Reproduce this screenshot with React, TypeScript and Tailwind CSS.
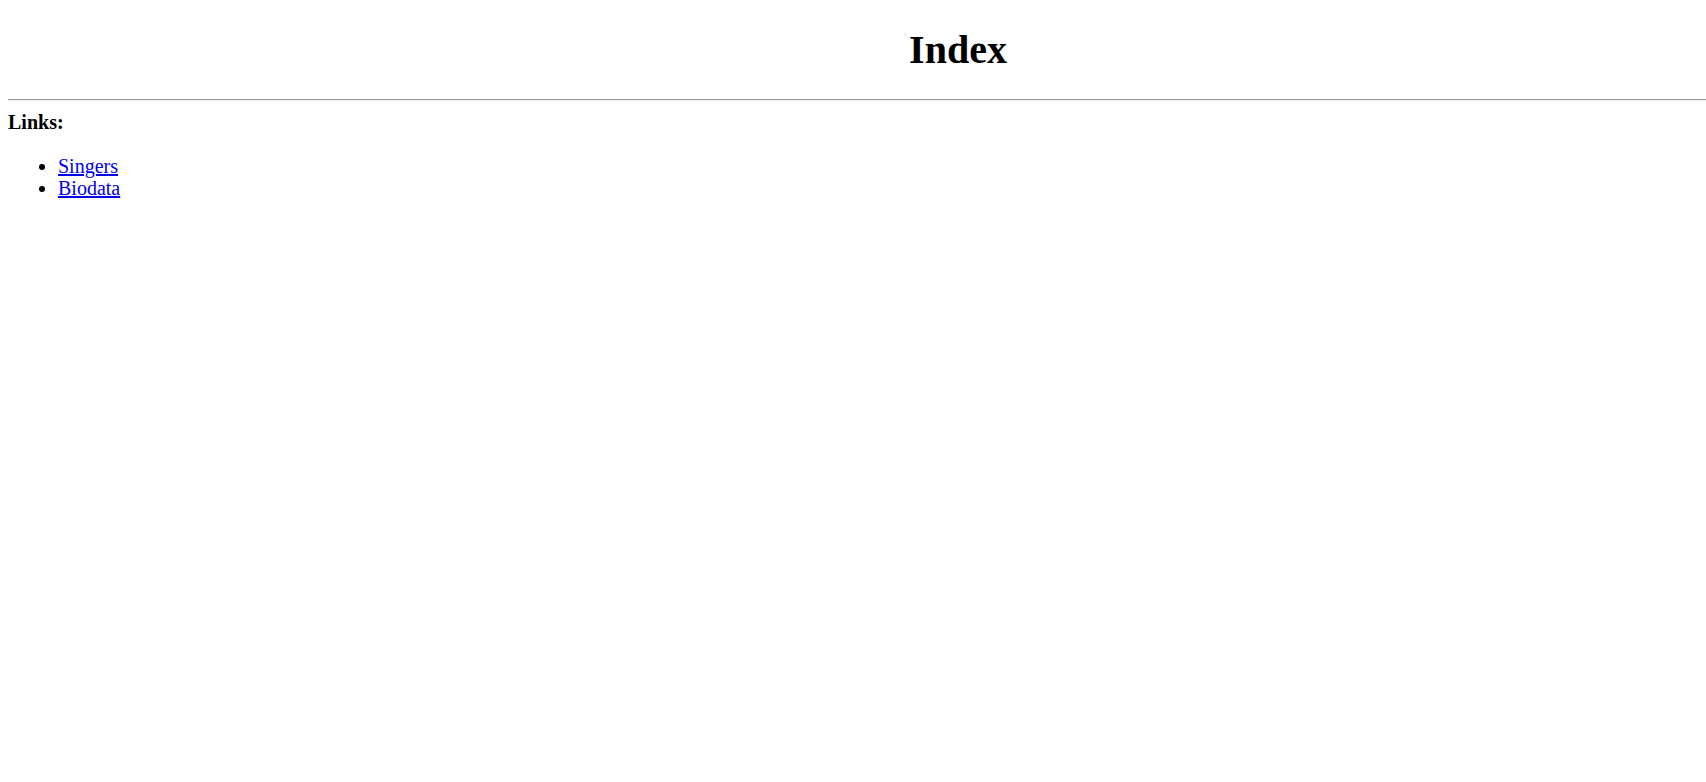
const links = ['Singers', 'Biodata'];

const App = () => {
	return (
		<div className="overflow-hidden h-screen bg-white text-black font-['Liberation_Serif',_serif] text-[20px] leading-[22px]">
			<div className="w-[1900px] ml-2">
				<h1 className="text-center font-bold text-[40px] leading-[44px] mt-[28px] mb-[27px]">
					Index
				</h1>
				<hr className="h-0 border-0 border-t border-b border-t-[#9a9a9a] border-b-[#eeeeee]" />
				<b className="block mt-[10px]">Links:</b>
				<ul className="list-disc pl-[50px] mt-[22px]">
					{links.map((name) => (
						<li key={name} className="leading-[22px]">
							<a href="#" className="text-[#0000ee] underline">
								{name}
							</a>
						</li>
					))}
				</ul>
			</div>
		</div>
	);
};

export default App;
